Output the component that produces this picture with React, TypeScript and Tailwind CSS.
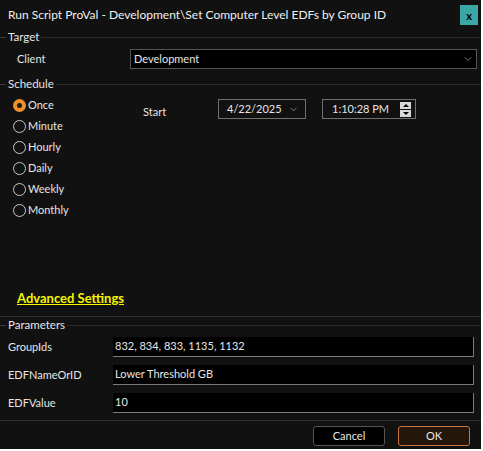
import React from 'react';
import { ChevronDown } from 'lucide-react';

const font = { fontFamily: 'Lato, "Noto Sans", Arial, sans-serif' };

const GroupTitle = ({ label }: { label: string }) => (
  <div className="flex items-center h-[14px]">
    <div className="w-[6px] h-px bg-[#3a3a3a]" />
    <span className="px-[2px] text-[11.5px] leading-none text-[#e6e6e6]">{label}</span>
    <div className="flex-1 h-px bg-[#2a2a2a]" />
  </div>
);

const Radio = ({ label, checked }: { label: string; checked?: boolean }) => (
  <div className="flex items-center h-[21px] gap-[2px]">
    {checked ? (
      <div className="w-[13px] h-[13px] rounded-full bg-[#f0902a] flex items-center justify-center">
        <div className="w-[5px] h-[5px] rounded-full bg-[#1a1a1a]" />
      </div>
    ) : (
      <div className="w-[13px] h-[13px] rounded-full border border-[#c8c8c8]" />
    )}
    <span className="text-[11px] text-[#e6e6e6]">{label}</span>
  </div>
);

const ParamRow = ({ label, value }: { label: string; value: string }) => (
  <div className="flex items-center h-[28px]">
    <span className="w-[113px] pl-[8px] text-[11px] text-[#e6e6e6]">{label}</span>
    <div className="w-[361px] h-[20px] bg-black border-b border-r border-[#7a7a7a] flex items-center pl-[2px] text-[11px] text-[#e6e6e6]">
      {value}
    </div>
  </div>
);

export default function App() {
  return (
    <div className="w-[483px] h-[451px] bg-white" style={font}>
      <div className="w-[481px] h-[449px] bg-[#111111] flex flex-col">
        {/* title bar */}
        <div className="h-[30px] flex items-center justify-between pl-[8px] pr-[3px]">
          <span className="text-[12px] text-[#f0f0f0]">Run Script ProVal - Development\Set Computer Level EDFs by Group ID</span>
          <div className="w-[18px] h-[20px] bg-[#3aa6a6] flex items-center justify-center text-[11px] font-bold text-black leading-none">x</div>
        </div>

        {/* Target */}
        <GroupTitle label="Target" />
        <div className="flex items-center h-[24px] mt-[3px]">
          <span className="w-[130px] pl-[17px] text-[11px] text-[#e6e6e6]">Client</span>
          <div className="w-[347px] h-[20px] bg-black border border-[#555] flex items-center justify-between pl-[3px] pr-[2px] text-[11px] text-[#e6e6e6]">
            Development
            <ChevronDown className="w-[12px] h-[12px] text-[#aaa]" strokeWidth={1.5} />
          </div>
        </div>
        <div className="h-[6px]" />

        {/* Schedule */}
        <div className="h-[240px] border-b border-[#2f2f2f] flex flex-col">
          <GroupTitle label="Schedule" />
          <div className="flex pl-[13px] mt-[4px]">
            <div className="w-[130px] flex flex-col">
              <Radio label="Once" checked />
              <Radio label="Minute" />
              <Radio label="Hourly" />
              <Radio label="Daily" />
              <Radio label="Weekly" />
              <Radio label="Monthly" />
            </div>
            <div className="flex items-start pt-[4px]">
              <span className="w-[75px] text-[11px] text-[#e6e6e6] mt-[5px]">Start</span>
              <div className="w-[88px] h-[20px] border border-[#707070] flex items-center justify-between pl-[8px] pr-[6px] text-[11px] text-[#e6e6e6]">
                4/22/2025
                <ChevronDown className="w-[11px] h-[11px] text-[#aaa]" strokeWidth={1.5} />
              </div>
              <div className="ml-[16px] w-[94px] h-[20px] border border-[#707070] flex items-center justify-between pl-[9px] pr-[4px] text-[11px] text-[#e6e6e6]">
                1:10:28 PM
                <div className="flex flex-col gap-[1px]">
                  <div className="w-[11px] h-[7px] bg-[#d8d8d8] flex items-center justify-center">
                    <div className="w-0 h-0 border-l-[3px] border-r-[3px] border-b-[3px] border-l-transparent border-r-transparent border-b-black" />
                  </div>
                  <div className="w-[11px] h-[7px] bg-[#d8d8d8] flex items-center justify-center">
                    <div className="w-0 h-0 border-l-[3px] border-r-[3px] border-t-[3px] border-l-transparent border-r-transparent border-t-black" />
                  </div>
                </div>
              </div>
            </div>
          </div>
          <div className="flex-1" />
          <div className="pl-[17px] pb-[7px]">
            <span className="text-[13px] font-bold text-[#f5f500] underline">Advanced Settings</span>
          </div>
        </div>

        {/* Parameters */}
        <div className="mt-[1px] h-[103px] border-b border-[#2f2f2f] flex flex-col">
          <GroupTitle label="Parameters" />
          <div className="mt-[1px] flex flex-col">
            <ParamRow label="GroupIds" value="832, 834, 833, 1135, 1132" />
            <ParamRow label="EDFNameOrID" value="Lower Threshold GB" />
            <ParamRow label="EDFValue" value="10" />
          </div>
        </div>

        {/* buttons */}
        <div className="flex-1 flex items-center justify-end pr-[11px] gap-[13px] pt-[1px]">
          <button className="w-[72px] h-[20px] rounded-[3px] bg-black border border-[#555] text-[11px] text-[#e6e6e6] leading-none">Cancel</button>
          <button className="w-[72px] h-[20px] rounded-[3px] bg-[#241608] border border-[#c8783a] text-[11px] text-[#e6e6e6] leading-none">OK</button>
        </div>
      </div>
    </div>
  );
}
